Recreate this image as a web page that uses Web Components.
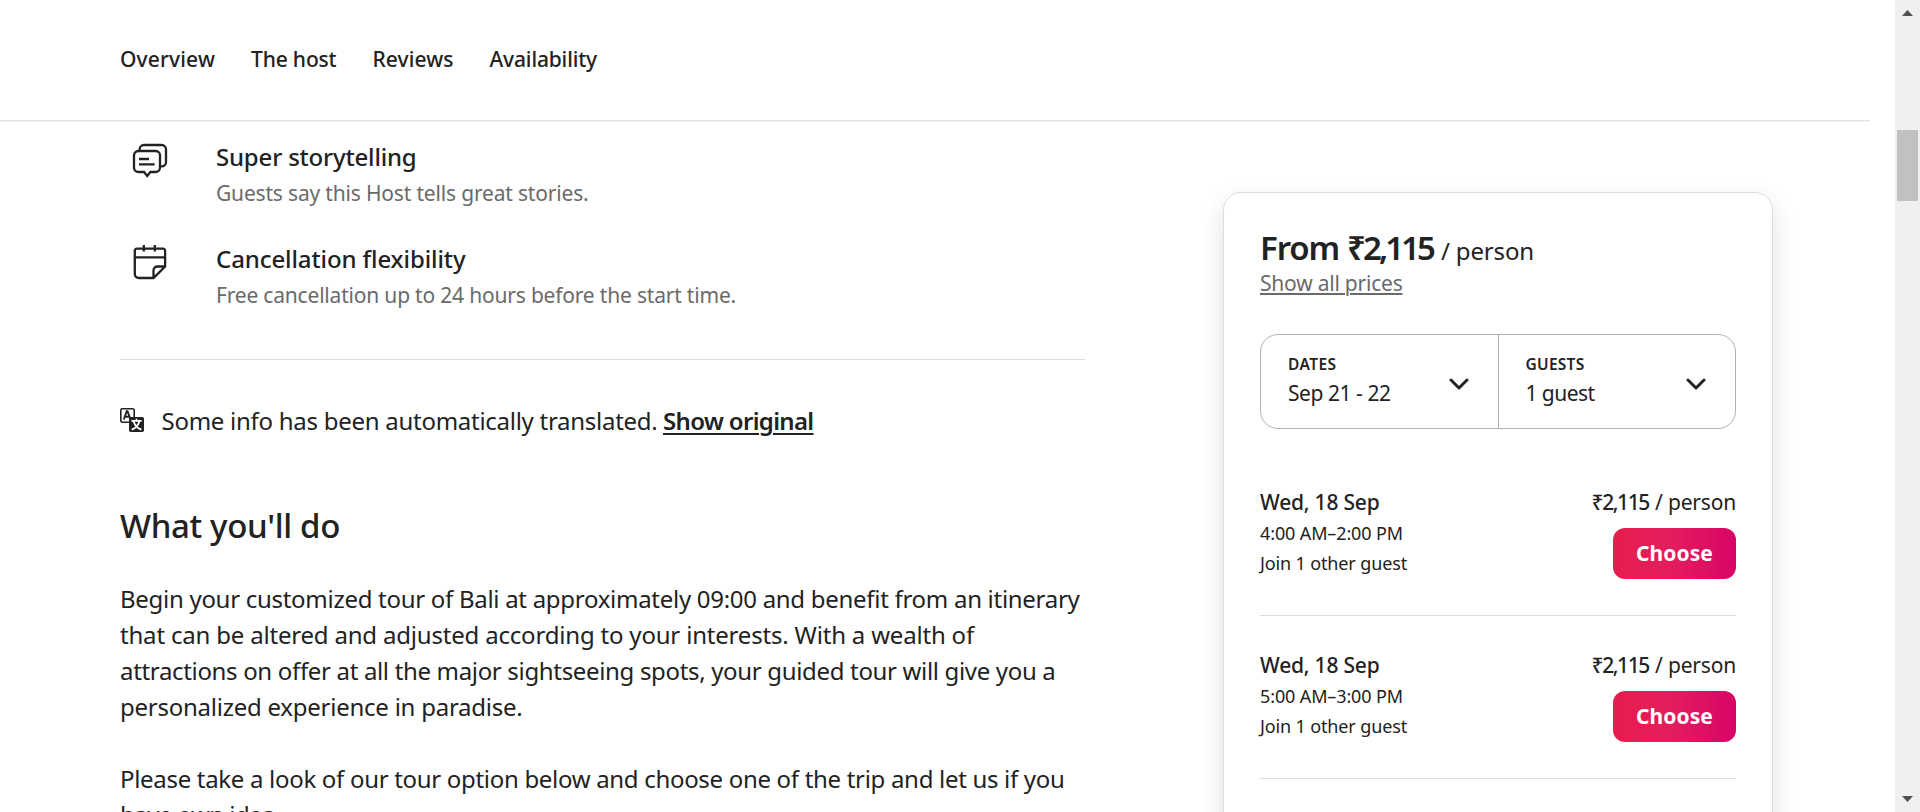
<!DOCTYPE html>
<html lang="en">
<head>
<meta charset="utf-8">
<title>Experience</title>
<style>
html,body{margin:0;height:100%;overflow:hidden;background:#fff}
body{font-family:"Noto Sans",Roboto,sans-serif;color:#222}
</style>
</head>
<body>
<experience-page></experience-page>
<script>
class Base extends HTMLElement{
  connectedCallback(){
    if(this.shadowRoot)return;
    this.attachShadow({mode:'open'}).innerHTML=this.view();
    if(this.ready)this.ready();
  }
  a(n){return this.getAttribute(n)||''}
}

/* One line of copy, tracked so that it fills the measure given in "w". */
customElements.define('fit-line',class extends Base{
  view(){return `<style>:host{display:block;white-space:pre}span{display:inline-block;text-decoration:inherit}</style><span><slot></slot></span>`}
  ready(){
    const s=this.shadowRoot.querySelector('span');
    const n=this.textContent.length,w=+this.a('w');
    const own=s.getBoundingClientRect().width;
    s.style.letterSpacing=((w-own)/n).toFixed(4)+'px';
    this.style.width=w+'px';
  }
});

customElements.define('site-nav',class extends Base{
  view(){return `<style>
  :host{display:block;height:120px;width:1870px;border-bottom:1px solid #e2e2e2;box-shadow:0 1px 0 #f2f2f2}
  nav{display:flex;gap:36px;padding:44px 0 0 120px;font-size:21px;line-height:31px;font-weight:500}
  </style><nav><fit-line w="95">Overview</fit-line><fit-line w="85.5">The host</fit-line><fit-line w="81">Reviews</fit-line><fit-line w="107.5">Availability</fit-line></nav>`}
});

const icons={
 chat:`<path d="M7.6 8V6.4a4.4 4.4 0 0 1 4.4-4.4H29.6a4.4 4.4 0 0 1 4.4 4.4V19a4.4 4.4 0 0 1-4.4 4.4H28.6"/><path d="M6.4 8H23.6A4.4 4.4 0 0 1 28 12.4V24.6A4.4 4.4 0 0 1 23.6 29H18.4L15.2 33L12 29H6.4A4.4 4.4 0 0 1 2 24.6V12.4A4.4 4.4 0 0 1 6.4 8z"/><path d="M7 16H17M7 21.3H22.6"/>`,
 calendar:`<path d="M21.5 33H6.7A3.9 3.9 0 0 1 2.8 29.1V5.6A1.9 1.9 0 0 1 4.7 3.7H31.2A1.9 1.9 0 0 1 33.1 5.6V21.5L21.5 33zM2.8 12.4H33.1M11.8 0V6.6M22.8 0V6.6M21.5 33V25.4A3.9 3.9 0 0 1 25.4 21.5H33.1"/>`
};
customElements.define('feature-item',class extends Base{
  view(){return `<style>
  :host{display:flex;height:64px}
  svg{flex:none;width:36px;height:37px;margin:0 48px 0 12px;fill:none;stroke:#222;stroke-width:2.3;overflow:visible}
  .t{font-size:24px;line-height:28px;font-weight:500;margin-bottom:9px}
  .s{font-size:21px;line-height:27px;color:#6a6a6a}
  </style><svg viewBox="0 0 36 37">${icons[this.a('icon')]}</svg>
  <div><fit-line class="t" w="${this.a('tw')}">${this.a('heading')}</fit-line><fit-line class="s" w="${this.a('sw')}">${this.a('detail')}</fit-line></div>`}
});

customElements.define('translate-note',class extends Base{
  view(){return `<style>
  :host{display:flex;align-items:flex-start;height:36px;font-size:24px;line-height:34px}
  svg{width:24px;height:24px;flex:none;margin:4px 17.5px 0 0}
  .o{font-weight:600;margin-left:5.5px;text-decoration:underline;text-decoration-thickness:2px;text-underline-offset:3px}
  </style><svg viewBox="0 0 24 24" fill="none" stroke="#222">
  <path stroke-width="1.6" d="M9 14.2H2.2A1.4 1.4 0 0 1 .8 12.8V2.2A1.4 1.4 0 0 1 2.2.8H12.8A1.4 1.4 0 0 1 14.2 2.2V9"/>
  <path stroke-width="1.9" d="M3.8 11.5L6.7 3.3H7.5L10.6 11.5M4.9 8.8H9.3"/>
  <rect x="9" y="9" width="15" height="15" rx="1.8" fill="#222" stroke="none"/>
  <path stroke="#fff" stroke-width="1.7" d="M11.4 12.9H21.6M16.5 10.7V13M19.4 13C18.6 17 15.5 20.3 11.6 21.6M13.6 13C14.4 17 17.5 20.3 21.4 21.6"/></svg>
  <fit-line w="496">Some info has been automatically translated.</fit-line><fit-line class="o" w="150.5">Show original</fit-line>`}
});

customElements.define('about-section',class extends Base{
  view(){return `<style>
  :host{display:block;margin-top:67px}
  .h{font-size:33px;line-height:38px;font-weight:500;margin-bottom:36px}
  .p{font-size:24px;line-height:36px;margin-bottom:36px}
  </style><fit-line class="h" w="220">What you'll do</fit-line>
  <div class="p"><fit-line w="959.5">Begin your customized tour of Bali at approximately 09:00 and benefit from an itinerary</fit-line>
  <fit-line w="854">that can be altered and adjusted according to your interests. With a wealth of</fit-line>
  <fit-line w="935.5">attractions on offer at all the major sightseeing spots, your guided tour will give you a</fit-line>
  <fit-line w="402.5">personalized experience in paradise.</fit-line></div>
  <div class="p"><fit-line w="944.5">Please take a look of our tour option below and choose one of the trip and let us if you</fit-line>
  <fit-line w="155">have own idea</fit-line></div>`}
});

customElements.define('picker-field',class extends Base{
  view(){return `<style>
  :host{display:flex;flex:1;justify-content:space-between;padding:20px 29px 0 27px}
  .l{font-size:15.5px;line-height:19px;font-weight:600;margin-bottom:6px}
  .v{font-size:21px;line-height:27px}
  svg{width:20px;height:12px;margin-top:23px;fill:none;stroke:#222;stroke-width:3;stroke-linecap:round;stroke-linejoin:round}
  </style><div><fit-line class="l" w="${this.a('lw')}">${this.a('label')}</fit-line><fit-line class="v" w="${this.a('vw')}">${this.a('value')}</fit-line></div>
  <svg viewBox="0 0 20 12"><path d="M2 2L10 10L18 2"/></svg>`}
});

customElements.define('time-slot',class extends Base{
  view(){return `<style>
  :host{display:flex;justify-content:space-between;height:126px;border-bottom:1px solid #ddd;margin-bottom:36px}
  .d{font-size:21px;line-height:27px;font-weight:500;margin-bottom:2px}
  .m{font-size:18px;line-height:30px}
  .r{display:flex;flex-direction:column;align-items:flex-end}
  .p{display:flex;gap:6px;font-size:21px;line-height:27px}
  .b{font-weight:500}
  button{display:flex;justify-content:center;margin:12px 0 0;padding:0;width:123px;height:51px;border:0;border-radius:12px;color:#fff;font:700 21px/50px "Noto Sans",sans-serif;background:linear-gradient(to right,#e61e4d 0%,#e31c5f 50%,#d70466 100%)}
  </style><div><fit-line class="d" w="119.5">Wed, 18 Sep</fit-line><fit-line class="m" w="143">${this.a('time')}</fit-line><fit-line class="m" w="147">Join 1 other guest</fit-line></div>
  <div class="r"><div class="p"><fit-line class="b" w="57.5">₹2,115</fit-line><fit-line w="81">/ person</fit-line></div><button><fit-line w="77">Choose</fit-line></button></div>`}
});

customElements.define('booking-card',class extends Base{
  view(){return `<style>
  :host{display:block;box-sizing:border-box;width:550px;height:760px;padding:36px;border:1px solid #ddd;border-radius:18px;background:#fff;box-shadow:0 9px 24px rgba(0,0,0,.12)}
  .price{display:flex;align-items:baseline;height:39px;line-height:38px}
  .big{font-size:33px;font-weight:600;margin-right:8px}.per{font-size:24px}
  .all{font-size:21px;line-height:27px;color:#6a6a6a;margin-top:2px;text-decoration:underline;text-decoration-thickness:2px;text-underline-offset:2px}
  .pick{display:flex;box-sizing:border-box;height:95px;margin:37px 0 60px;border:1px solid #b0b0b0;border-radius:18px}
  .pick picker-field+picker-field{border-left:1px solid #b0b0b0}
  </style><div class="price"><fit-line class="big" w="79">From</fit-line><fit-line class="big" w="86">₹2,115</fit-line><fit-line class="per" w="93">/ person</fit-line></div>
  <fit-line class="all" w="142.5">Show all prices</fit-line>
  <div class="pick"><picker-field label="DATES" value="Sep 21 - 22" lw="48.5" vw="102.5"></picker-field><picker-field label="GUESTS" value="1 guest" lw="59" vw="69"></picker-field></div>
  <time-slot time="4:00 AM–2:00 PM"></time-slot><time-slot time="5:00 AM–3:00 PM"></time-slot>`}
});

customElements.define('page-scrollbar',class extends Base{
  view(){return `<style>
  :host{display:flex;flex-direction:column;align-items:center;width:25px;height:812px;background:#f0f0f0;flex:none}
  svg{width:11px;height:6px;fill:#505050;flex:none}
  .up{margin-top:10px}.thumb{width:21px;height:71px;margin:114px 0 auto;background:#c1c1c1}.down{margin-bottom:10px}
  </style><svg class="up" viewBox="0 0 11 6"><path d="M5.5 0L11 6H0z"/></svg><div class="thumb"></div><svg class="down" viewBox="0 0 11 6"><path d="M0 0H11L5.5 6z"/></svg>`}
});

customElements.define('experience-page',class extends Base{
  view(){return `<style>
  :host{display:flex;height:812px;overflow:hidden}
  .page{width:1895px;flex:none;height:812px;overflow:hidden}
  .cols{display:flex;gap:138px;padding-left:120px;align-items:flex-start}
  main{width:965px;padding-top:22px}
  feature-item+feature-item{margin-top:38px}
  hr{border:0;height:1px;background:#ddd;margin:50px 0 44px}
  booking-card{margin-top:71px}
  </style><div class="page"><site-nav></site-nav><div class="cols"><main>
  <feature-item icon="chat" heading="Super storytelling" detail="Guests say this Host tells great stories." tw="200.5" sw="372.5"></feature-item>
  <feature-item icon="calendar" heading="Cancellation flexibility" detail="Free cancellation up to 24 hours before the start time." tw="249.5" sw="520"></feature-item>
  <hr><translate-note></translate-note><about-section></about-section></main>
  <booking-card></booking-card></div></div><page-scrollbar></page-scrollbar>`}
});
</script>
</body>
</html>
